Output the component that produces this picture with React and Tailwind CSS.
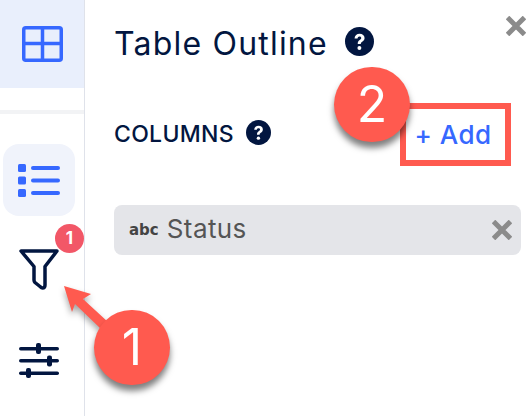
const font = { fontFamily: 'Inter, sans-serif' };

function Help({ size }) {
    return (
        <svg width={size} height={size} viewBox="0 0 28 28" className="shrink-0">
            <circle cx="14" cy="14" r="14" fill="#021640" />
            <path d="M9.2 11c.2-2.9 2.2-4.5 4.9-4.5 2.800 0 4.800 1.600 4.800 4 0 1.900-1 2.800-2.300 3.700-1 .7-1.300 1.100-1.300 2.300h-3c-.1-2 .4-3 1.900-4 1-.7 1.500-1.100 1.500-1.900 0-.9-.7-1.500-1.700-1.500-1.100 0-1.800.7-1.900 1.900z" fill="#fff" />
            <circle cx="13.900" cy="20.300" r="1.900" fill="#fff" />
        </svg>
    )
}

function Cruz({ className }) {
    return (
        <svg className={className} width="20" height="20" viewBox="0 0 20 20" stroke="#8b8b8b" strokeWidth="5">
            <path d="M1.500 1.500l17 17M18.500 1.500l-17 17" />
        </svg>
    )
}

export default function App() {
    return (
        <div className="relative flex h-[416px] w-[532px] overflow-hidden bg-white" style={font}>
            {/* barra lateral */}
            <div className="flex w-[85px] shrink-0 flex-col border-r border-[#dfe2ea]">
                <div className="flex h-[88px] items-center justify-center bg-[#e9effc]">
                    <svg width="41" height="36" viewBox="0 0 41 36" fill="none" stroke="#3668ff" strokeWidth="3.500">
                        <rect x="1.750" y="1.750" width="37.500" height="32.500" rx="2" />
                        <path d="M20.500 2v32M2 17.500h37" />
                    </svg>
                </div>
                <div className="mt-[22px] h-1 bg-[#f2f3f5]" />
                <div className="mt-[30px] ml-[3px] flex h-[72px] w-[72px] items-center justify-center rounded-2xl bg-[#f0f3fb]">
                    <svg width="42" height="33" viewBox="0 0 42 33" fill="#3668ff">
                        <rect x="0" y="0" width="8" height="8" rx="1.500" />
                        <rect x="0" y="12.500" width="8" height="8" rx="1.500" />
                        <rect x="0" y="25" width="8" height="8" rx="1.500" />
                        <rect x="13" y="2" width="29" height="4" rx="2" />
                        <rect x="13" y="14.500" width="29" height="4" rx="2" />
                        <rect x="13" y="27" width="29" height="4" rx="2" />
                    </svg>
                </div>
                <div className="mt-[33px] ml-[19px]">
                    <svg width="40" height="41" viewBox="0 0 40 41" fill="none" stroke="#021640" strokeWidth="3.500" strokeLinejoin="round">
                        <path d="M2 2h36L26 17.500V36c0 2-1 3-2.500 3-1 0-1.500-.5-2.500-1.500l-5-4c-.7-.7-1-1.500-1-2.500V17.500z" />
                    </svg>
                </div>
                <div className="mt-[53px] ml-[19px]">
                    <svg width="40" height="35" viewBox="0 0 40 35" fill="#021640">
                        <rect x="0" y="4" width="40" height="3.500" rx="1.750" />
                        <rect x="0" y="16" width="40" height="3.500" rx="1.750" />
                        <rect x="0" y="28.500" width="40" height="3.500" rx="1.750" />
                        <rect x="17" y="0" width="5" height="11" rx="2" />
                        <rect x="28" y="12.500" width="5" height="11" rx="2" />
                        <rect x="7" y="25" width="5" height="10" rx="2" />
                    </svg>
                </div>
            </div>

            {/* panel */}
            <div className="flex flex-1 flex-col pl-[29px] pr-[11px]">
                <div className="mt-[26px] flex h-9 items-center">
                    <span className="text-[32px] leading-9 tracking-[1.2px] text-[#021640]">Table Outline</span>
                    <span className="ml-[17px] -mt-[6px]"><Help size={29} /></span>
                </div>
                <div className="mt-[41px] flex h-[62px] items-center justify-between">
                    <div className="flex items-center">
                        <span className="text-[23px] font-medium tracking-[0.3px] text-[#021640]">COLUMNS</span>
                        <span className="ml-[12px] -mt-[4px]"><Help size={25} /></span>
                    </div>
                    <div className="mr-[11px] flex h-[62px] w-[110px] items-center justify-center pr-[4px] text-[26px] font-medium tracking-[0.5px] text-[#3668ff]">+ Add</div>
                </div>
                <div className="mt-10 flex h-[50px] items-center rounded-lg bg-[#e4e5e9] pl-[15px] pr-[9px]">
                    <span className="text-[15px] font-bold text-[#444]" style={{ fontFamily: 'DejaVu Sans, sans-serif' }}>abc</span>
                    <span className="ml-[8px] -mt-[3px] flex-1 text-[26px] tracking-[0.4px] text-[#555]">Status</span>
                    <Cruz />
                </div>
            </div>

            {/* cerrar */}
            <Cruz className="absolute left-[506px] top-[16px]" />

            {/* badge */}
            <div className="absolute left-[55px] top-[224px] flex h-[29px] w-[29px] items-center justify-center rounded-full bg-[#f25767] text-[17px] font-bold text-white">1</div>

            {/* anotaciones */}
            <div className="absolute left-[400px] top-[103px] h-[63px] w-[111px] border-[6px] border-[#ff5a4f]" />
            <svg className="absolute left-0 top-0 drop-shadow-[0_4px_3px_rgba(0,0,0,0.35)]" width="532" height="416" fill="#ff5a4f">
                <path d="M64 286 L91 294 L83 299 L108 322 L100 328 L75 304 L72 312 Z" />
            </svg>
            <div className="absolute left-[94px] top-[310px] flex h-[75px] w-[76px] items-center justify-center rounded-full bg-[#ff5a4f] text-[50px] text-white shadow-[0_6px_6px_rgba(0,0,0,0.5)]">1</div>
            <div className="absolute left-[334px] top-[67px] flex h-[75px] w-[76px] items-center justify-center rounded-full bg-[#ff5a4f] text-[50px] text-white shadow-[0_6px_6px_rgba(0,0,0,0.5)]">2</div>
        </div>
    )
}
